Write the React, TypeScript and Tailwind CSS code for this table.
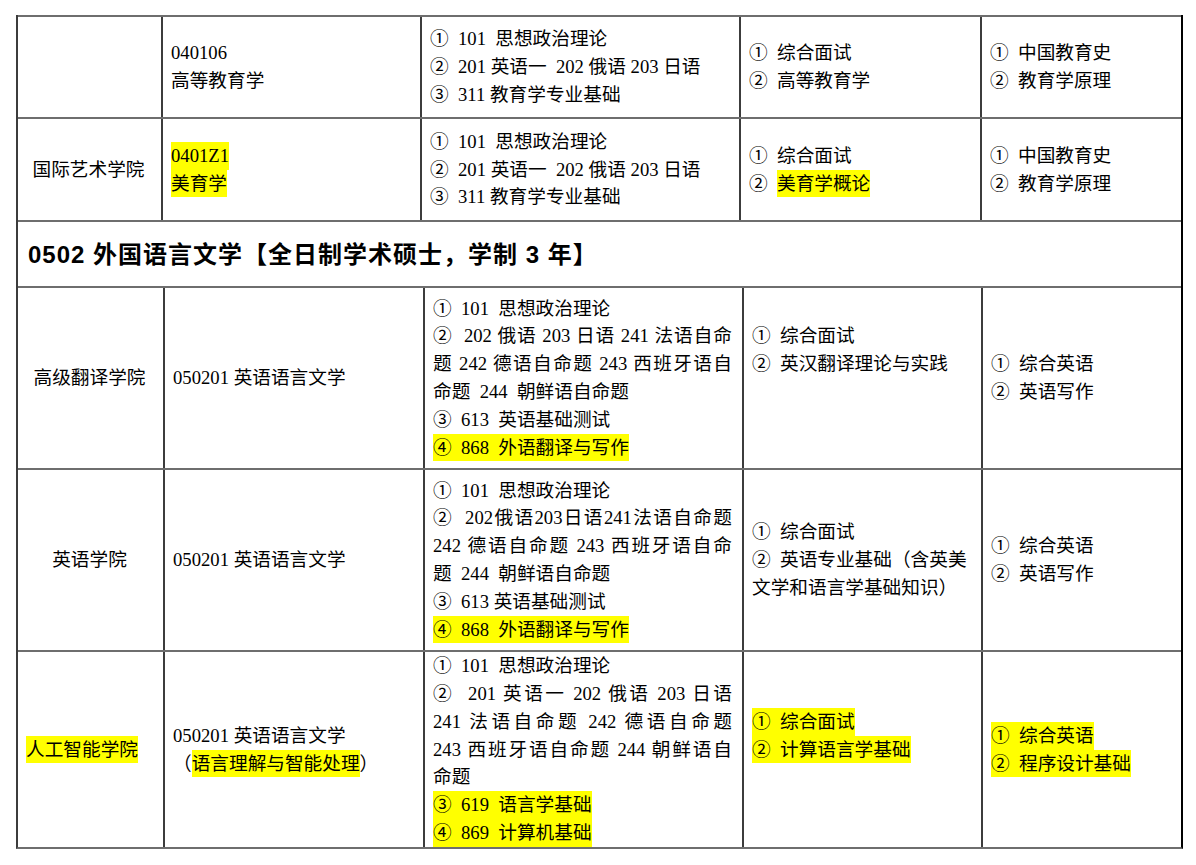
import React from "react";

const UP = "grid grid-cols-[143px_259px_319px_241px_1fr]";
const LOW = "grid grid-cols-[145px_260px_319px_239px_1fr]";

function Hl({ children }: { children: React.ReactNode }) {
    return <span className="inline-block bg-[#ffff00]">{children}</span>;
}

// one printed line; justified lines stretch to the cell edge like the PDF
function L({ children, j }: { children?: React.ReactNode; j?: boolean }) {
    if (j) return <div className="whitespace-nowrap [text-align-last:justify]">{children}</div>;
    return <div className="whitespace-pre">{children ?? "\u00a0"}</div>;
}

function Cell({ children, first, center }: { children?: React.ReactNode; first?: boolean; center?: boolean }) {
    return (
        <div
            className={
                (first ? "" : "border-l-2 border-[#3c3c3c] ") +
                (center ? "items-center text-center " : "") +
                "flex flex-col justify-center pl-[8px] pr-[10px]"
            }
        >
            {children}
        </div>
    );
}

export default function App() {
    return (
        <div className="w-[1196px] h-[865px] bg-white pt-[15px] pl-[16px] text-black font-['Liberation_Serif','Noto_Sans_CJK_SC',serif] text-[18.67px] leading-[27.8px]">
            <div className="w-[1167px] border-l-2 border-l-[#3c3c3c] border-r-2 border-r-black border-b-2 border-b-[#6e6e6e]">
                {/* 040106 */}
                <div className={UP + " h-[102px] border-t-2 border-[#6e6e6e]"}>
                    <Cell first />
                    <Cell>
                        <L>040106</L>
                        <L>高等教育学</L>
                    </Cell>
                    <Cell>
                        <L>{"①  101  思想政治理论"}</L>
                        <L>{"②  201 英语一  202 俄语 203 日语"}</L>
                        <L>{"③  311 教育学专业基础"}</L>
                    </Cell>
                    <Cell>
                        <L>{"①  综合面试"}</L>
                        <L>{"②  高等教育学"}</L>
                    </Cell>
                    <Cell>
                        <L>{"①  中国教育史"}</L>
                        <L>{"②  教育学原理"}</L>
                    </Cell>
                </div>

                {/* 0401Z1 */}
                <div className={UP + " h-[103px] border-t-2 border-[#6e6e6e]"}>
                    <Cell first center>
                        <L>国际艺术学院</L>
                    </Cell>
                    <Cell>
                        <L><Hl>0401Z1</Hl></L>
                        <L><Hl>美育学</Hl></L>
                    </Cell>
                    <Cell>
                        <L>{"①  101  思想政治理论"}</L>
                        <L>{"②  201 英语一  202 俄语 203 日语"}</L>
                        <L>{"③  311 教育学专业基础"}</L>
                    </Cell>
                    <Cell>
                        <L>{"①  综合面试"}</L>
                        <L>{"②  "}<Hl>美育学概论</Hl></L>
                    </Cell>
                    <Cell>
                        <L>{"①  中国教育史"}</L>
                        <L>{"②  教育学原理"}</L>
                    </Cell>
                </div>

                <div className="h-[66px] border-t-2 border-[#6e6e6e] flex items-center pl-[10px] pt-[2px] font-['Liberation_Sans','Noto_Sans_CJK_SC',sans-serif] font-bold text-[24px] tracking-[1px]">
                    0502 外国语言文学【全日制学术硕士，学制 3 年】
                </div>

                {/* 高级翻译学院 */}
                <div className={LOW + " h-[182px] border-t-2 border-[#6e6e6e]"}>
                    <Cell first center>
                        <L>高级翻译学院</L>
                    </Cell>
                    <Cell>
                        <L>050201 英语语言文学</L>
                    </Cell>
                    <Cell>
                        <L>{"①  101  思想政治理论"}</L>
                        <L j>②&nbsp; 202 俄语 203 日语 241 法语自命</L>
                        <L j>题 242 德语自命题 243 西班牙语自</L>
                        <L>{"命题  244  朝鲜语自命题"}</L>
                        <L>{"③  613  英语基础测试"}</L>
                        <L><Hl>{"④  868  外语翻译与写作"}</Hl></L>
                    </Cell>
                    <Cell>
                        <L>{"①  综合面试"}</L>
                        <L>{"②  英汉翻译理论与实践"}</L>
                        <L />
                        <L />
                    </Cell>
                    <Cell>
                        <L>{"①  综合英语"}</L>
                        <L>{"②  英语写作"}</L>
                    </Cell>
                </div>

                {/* 英语学院 */}
                <div className={LOW + " h-[182px] border-t-2 border-[#6e6e6e]"}>
                    <Cell first center>
                        <L>英语学院</L>
                    </Cell>
                    <Cell>
                        <L>050201 英语语言文学</L>
                    </Cell>
                    <Cell>
                        <L>{"①  101  思想政治理论"}</L>
                        <L j>②&nbsp; 202俄语203日语241法语自命题</L>
                        <L j>242 德语自命题 243 西班牙语自命</L>
                        <L>{"题  244  朝鲜语自命题"}</L>
                        <L>{"③  613 英语基础测试"}</L>
                        <L><Hl>{"④  868  外语翻译与写作"}</Hl></L>
                    </Cell>
                    <Cell>
                        <L>{"①  综合面试"}</L>
                        <L>{"②  英语专业基础（含英美"}</L>
                        <L>文学和语言学基础知识）</L>
                    </Cell>
                    <Cell>
                        <L>{"①  综合英语"}</L>
                        <L>{"②  英语写作"}</L>
                    </Cell>
                </div>

                {/* 人工智能学院 */}
                <div className={LOW + " h-[197px] border-t-2 border-[#6e6e6e]"}>
                    <Cell first>
                        <L><Hl>人工智能学院</Hl></L>
                    </Cell>
                    <Cell>
                        <L>050201 英语语言文学</L>
                        <L>（<Hl>语言理解与智能处理</Hl>）</L>
                    </Cell>
                    <Cell>
                        <L>{"①  101  思想政治理论"}</L>
                        <L j>②&nbsp; 201 英语一 202 俄语 203 日语</L>
                        <L j>241 法语自命题 242 德语自命题</L>
                        <L j>243 西班牙语自命题 244 朝鲜语自</L>
                        <L>命题</L>
                        <L><Hl>{"③  619  语言学基础"}</Hl></L>
                        <L><Hl>{"④  869  计算机基础"}</Hl></L>
                    </Cell>
                    <Cell>
                        <L><Hl>{"①  综合面试"}</Hl></L>
                        <L><Hl>{"②  计算语言学基础"}</Hl></L>
                        <L />
                    </Cell>
                    <Cell>
                        <L><Hl>{"①  综合英语"}</Hl></L>
                        <L><Hl>{"②  程序设计基础"}</Hl></L>
                    </Cell>
                </div>
            </div>
        </div>
    );
}
